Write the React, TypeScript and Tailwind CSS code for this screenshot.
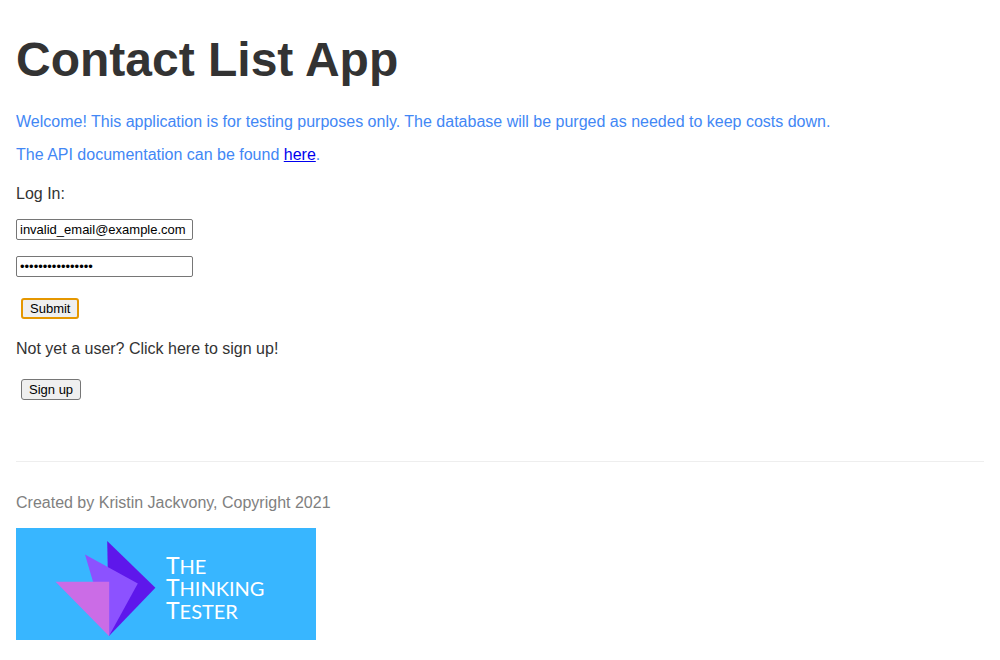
import { useState } from "react";

function Logo() {
  return (
    <svg
      width="300"
      height="112"
      viewBox="0 0 300 112"
      role="img"
      aria-label="The Thinking Tester"
      className="mt-[13px] block"
    >
      <rect width="300" height="112" fill="#38b6ff" />
      <polygon points="91.2,13 139.4,59.8 93,108" fill="#5e17eb" />
      <polygon points="69,26.5 121.8,55.6 93,108" fill="#8c52ff" />
      <polygon points="39.6,53.8 93.2,53.8 93.2,108.2" fill="#cb6ce6" />
      <g
        fill="#ffffff"
        fontFamily="Lato, sans-serif"
        fontSize="23"
      >
        <text x="150" y="46">
          T<tspan fontSize="20">HE</tspan>
        </text>
        <text x="150" y="68">
          T<tspan fontSize="20">HINKING</tspan>
        </text>
        <text x="150" y="91">
          T<tspan fontSize="20">ESTER</tspan>
        </text>
      </g>
    </svg>
  );
}

const fieldClass =
  "block h-[21px] w-[177px] rounded-[2px] border border-[#767676] bg-white px-[3px] text-[13px] leading-4 text-black outline-none";
const buttonClass =
  "ml-[5px] block h-[21px] rounded-[3px] bg-[#efefef] text-[13px] leading-4 text-black";

export default function App() {
  const [email, setEmail] = useState("invalid_email@example.com");
  const [password, setPassword] = useState("invalid_password");

  return (
    <div className="bg-white px-4 pt-8 pb-4 font-['Liberation_Sans',Arial,sans-serif] text-base text-[#333333]">
      <main>
        <h1 className="text-5xl leading-[56px] font-bold">Contact List App</h1>
        <div className="mt-[22px] flex flex-col gap-[9px] text-[#4287f5]">
          <p>
            Welcome! This application is for testing purposes only. The database
            will be purged as needed to keep costs down.
          </p>
          <p>
            The API documentation can be found{" "}
            <a href="#docs" className="text-[#0000ee] underline">
              here
            </a>
            .
          </p>
        </div>

        <form onSubmit={(e) => e.preventDefault()}>
          <p className="mt-[15px]">Log In:</p>
          <div className="mt-[13px] flex flex-col gap-4">
            <input
              type="email"
              aria-label="Email"
              value={email}
              onChange={(e) => setEmail(e.target.value)}
              className={fieldClass}
            />
            <input
              type="password"
              aria-label="Password"
              value={password}
              onChange={(e) => setPassword(e.target.value)}
              className={fieldClass}
            />
          </div>
          <button
            type="submit"
            className={`${buttonClass} mt-[21px] border-2 border-[#e59700] px-[7px]`}
          >
            Submit
          </button>
        </form>

        <p className="mt-[18px]">Not yet a user? Click here to sign up!</p>
        <button
          type="button"
          className={`${buttonClass} mt-[18px] border border-[#767676] px-[7px]`}
        >
          Sign up
        </button>
      </main>

      <footer className="mt-[61px] border-t border-[#eeeeee] pt-[29px] text-[#808080]">
        <p>Created by Kristin Jackvony, Copyright 2021</p>
        <Logo />
      </footer>
    </div>
  );
}
